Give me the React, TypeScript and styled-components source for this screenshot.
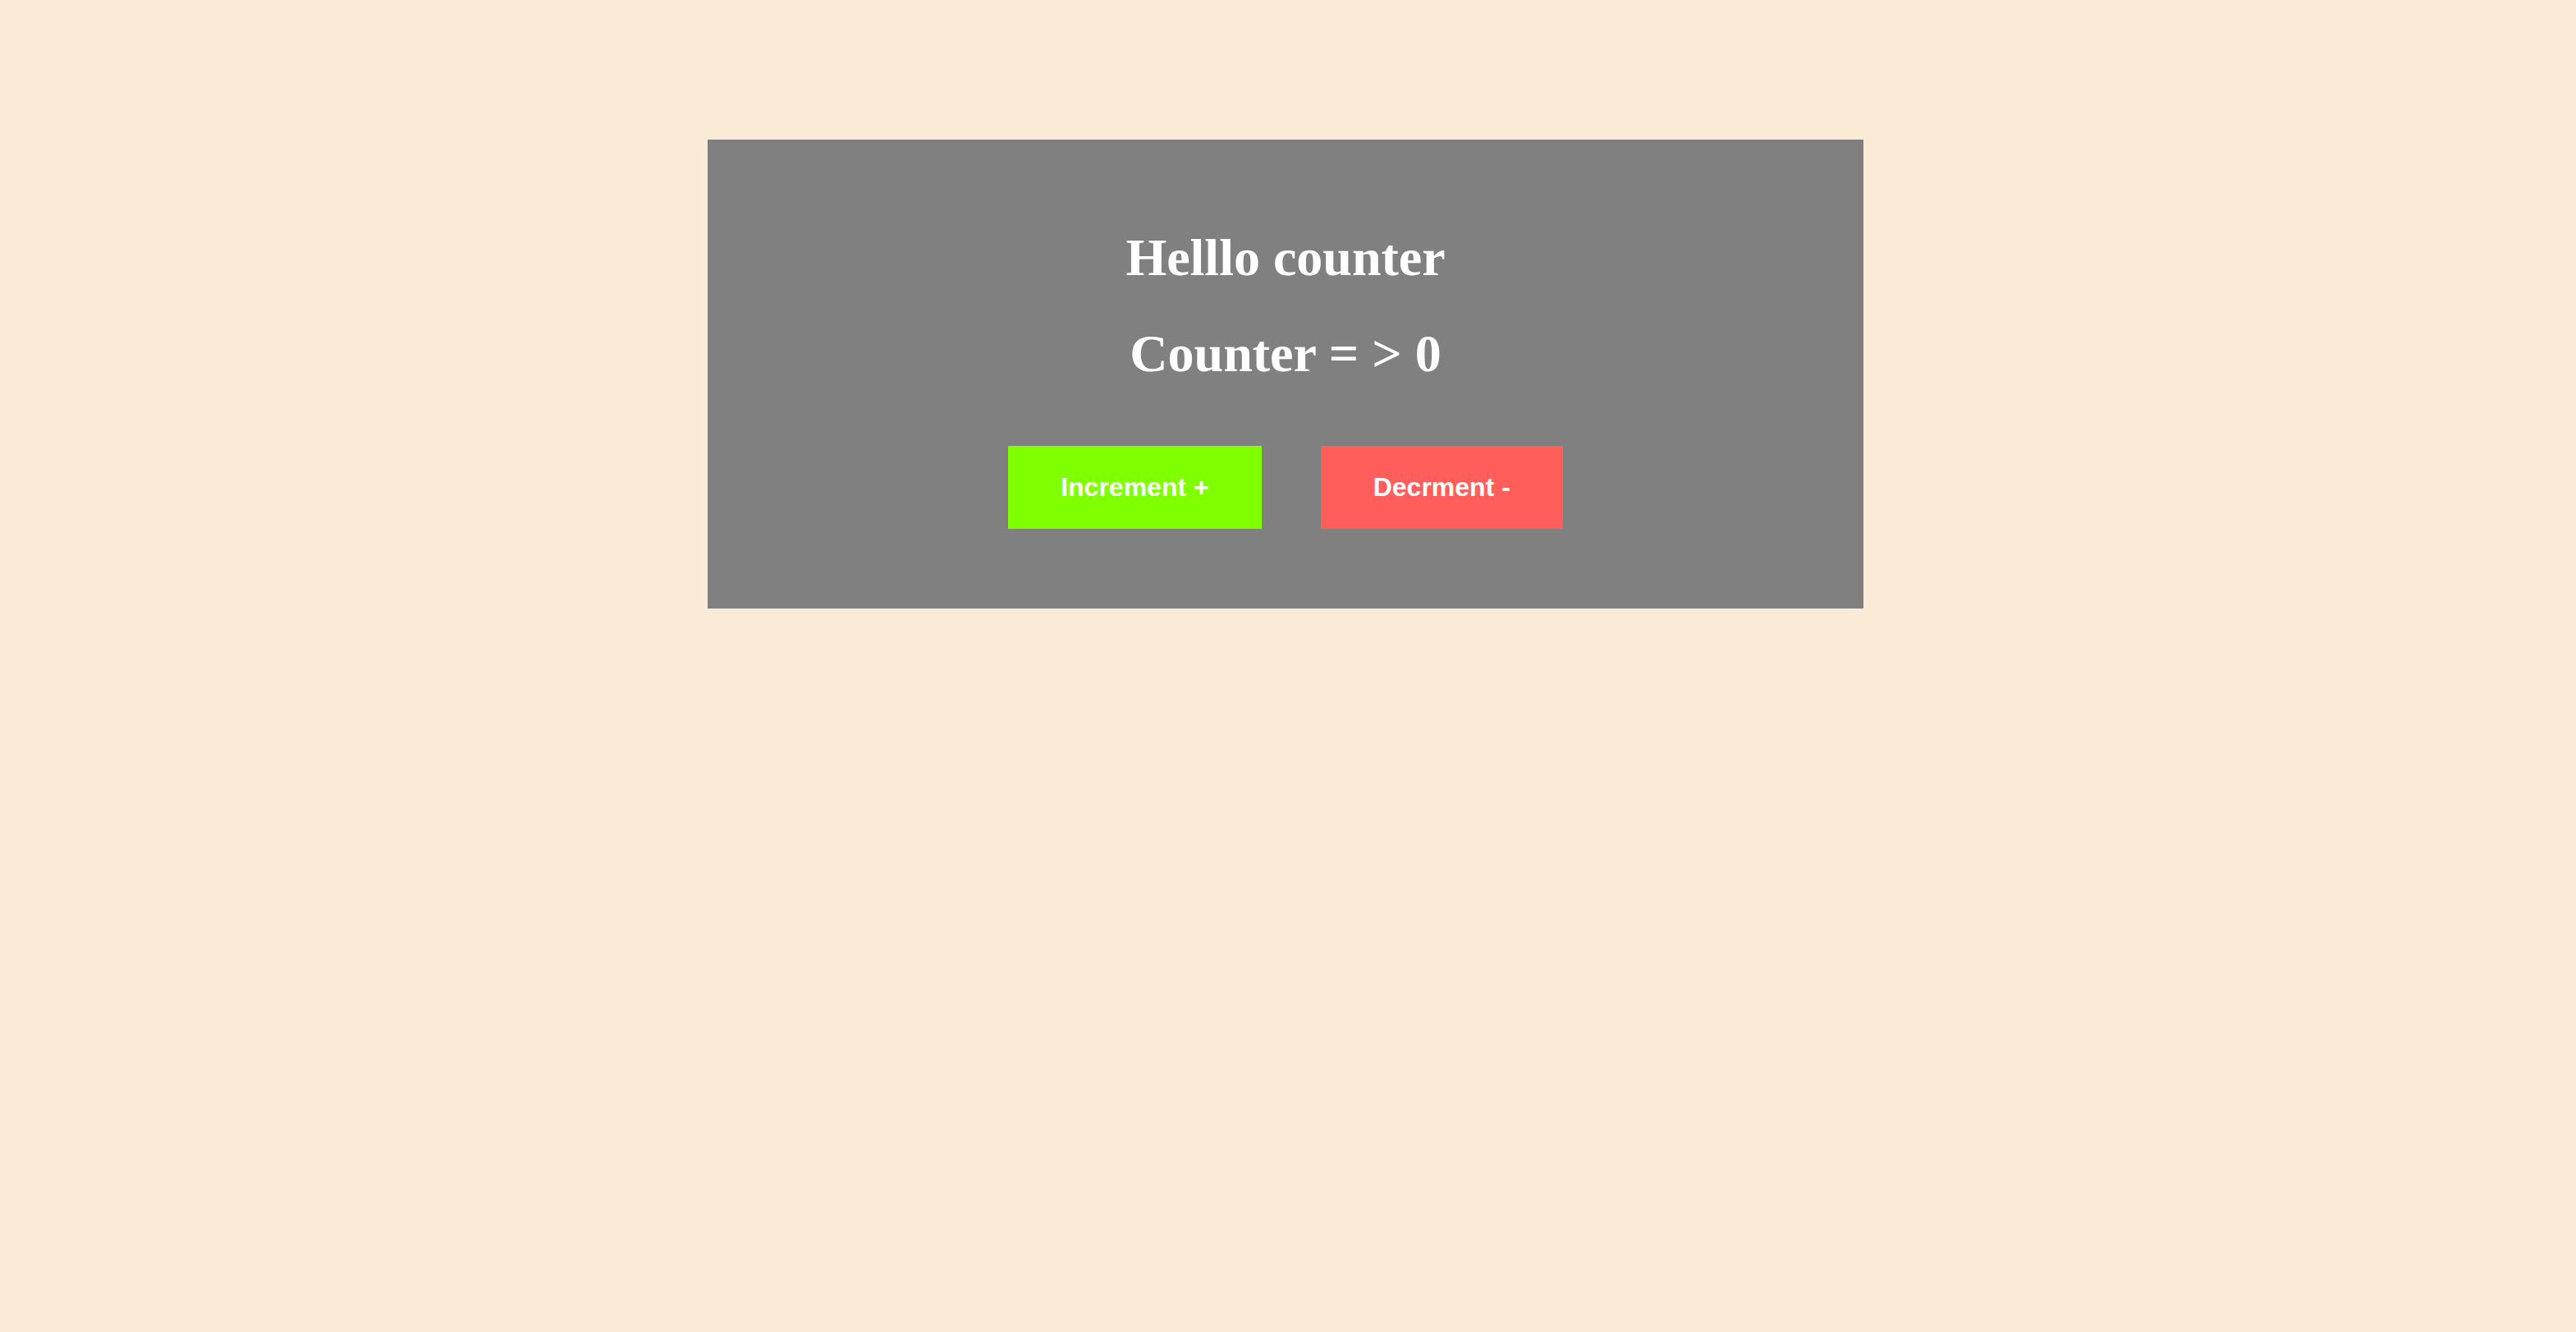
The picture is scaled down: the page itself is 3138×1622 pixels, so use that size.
import React, { useState } from "react";
import styled, { createGlobalStyle } from "styled-components";

const GlobalStyle = createGlobalStyle`
  html, body {
    margin: 0;
    padding: 0;
    background: #faebd7;
  }
  body {
    min-height: 1622px;
    font-family: "Liberation Serif", "Times New Roman", serif;
  }
`;

const Page = styled.main`
  display: block;
  padding-top: 170px;
`;

const Card = styled.section`
  box-sizing: border-box;
  width: 1408px;
  margin-left: 862px;
  padding: 64px 0;
  background: #808080;
  display: block;
  text-align: center;
`;

const Title = styled.h1`
  margin: 42.88px 0;
  font-family: "Liberation Serif", "Times New Roman", serif;
  font-size: 64px;
  font-weight: 700;
  line-height: normal;
  color: #ffffff;
`;

const ButtonRow = styled.div`
  display: flex;
  justify-content: center;
  gap: 72px;
  padding: 32px 0 33px;
`;

const Button = styled.button<{ $bg: string }>`
  border: none;
  border-radius: 0;
  padding: 32px 64px;
  background: ${(p) => p.$bg};
  color: #ffffff;
  font-family: "Liberation Sans", Arial, sans-serif;
  font-size: 32px;
  font-weight: 700;
  line-height: normal;
  cursor: pointer;
`;

export default function App() {
  const [count, setCount] = useState(0);
  return (
    <>
      <GlobalStyle />
      <Page>
        <Card>
          <Title>Helllo counter</Title>
          <Title>Counter = &gt; {count}</Title>
          <ButtonRow>
            <Button $bg="#80ff00" onClick={() => setCount(count + 1)}>
              Increment +
            </Button>
            <Button $bg="#ff5e5b" onClick={() => setCount(count - 1)}>
              Decrment -
            </Button>
          </ButtonRow>
        </Card>
      </Page>
    </>
  );
}
